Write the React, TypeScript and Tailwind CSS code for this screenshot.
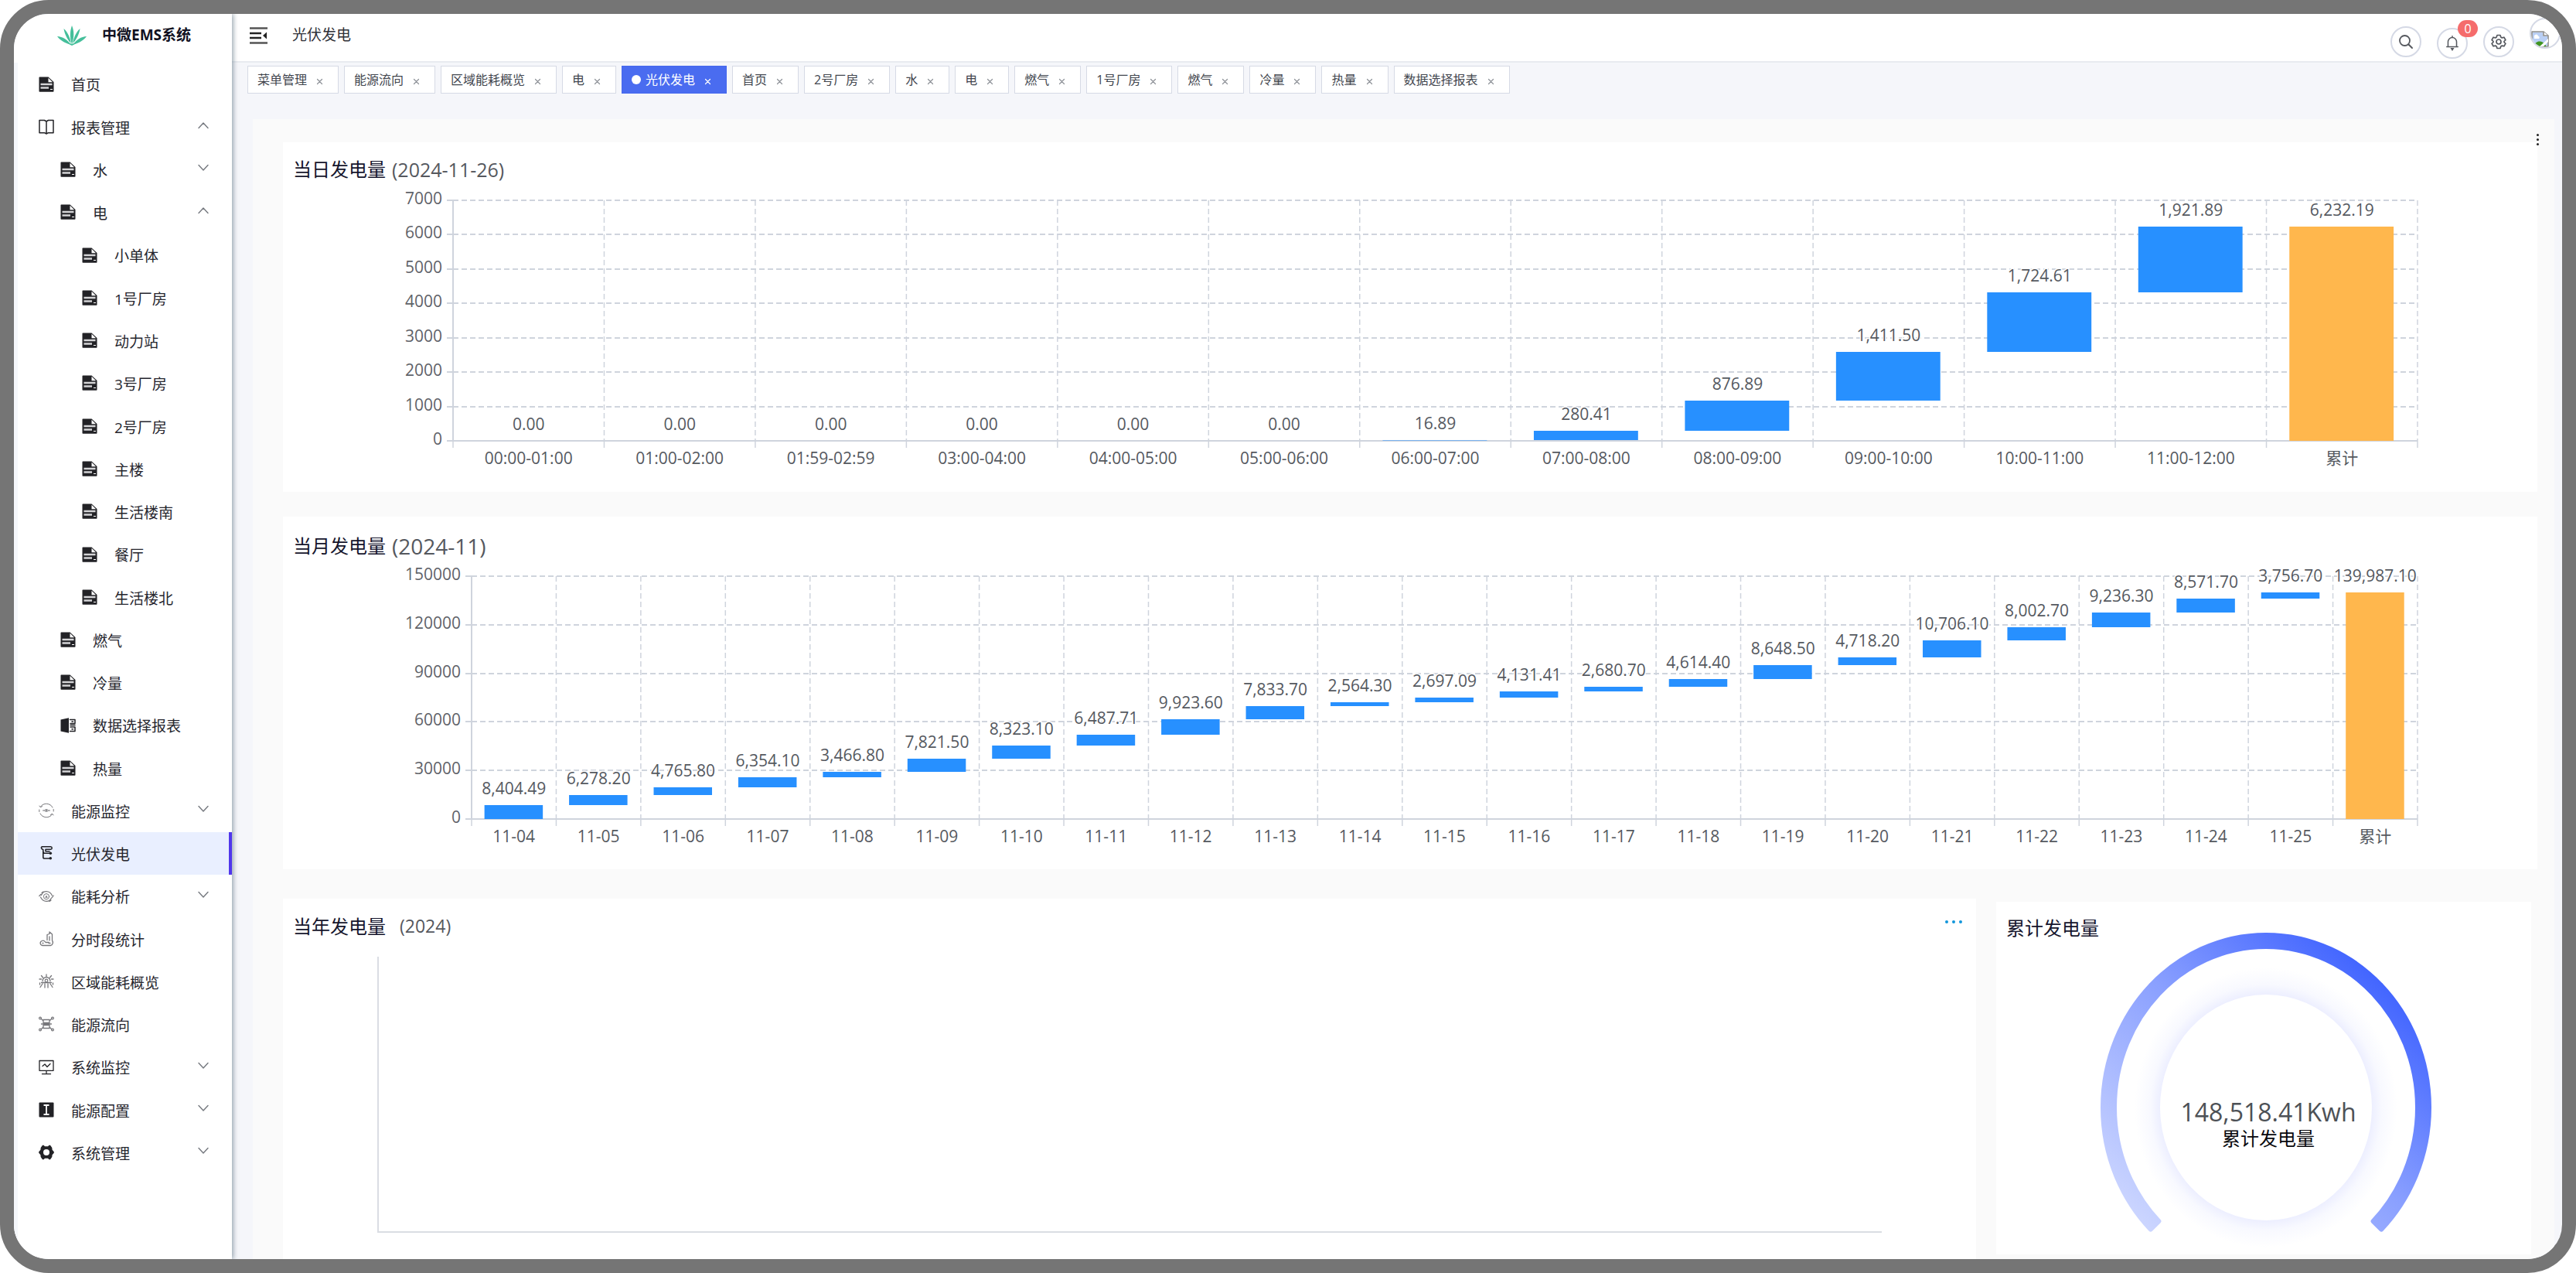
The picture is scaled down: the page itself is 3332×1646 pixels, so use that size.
import React from "react";

type IconName =
  | "doc" | "book" | "panel" | "cycle" | "tree" | "orbit"
  | "segment" | "region" | "flow" | "monitor" | "config" | "gear";

const stroke = { fill: "none", stroke: "currentColor", strokeLinecap: "round", strokeLinejoin: "round" } as const;

function Icon({ name }: { name: IconName }) {
  const dark = "size-5 shrink-0 text-[#222226]";
  const light = "size-5 shrink-0 text-[#77777b]";
  switch (name) {
    case "doc":
      return (
        <svg viewBox="0 0 20 20" className={dark} aria-hidden="true">
          <path d="M2 .5h10.5L19.500 7v12a.8.8 0 0 1-.8.8H1.300a.8.800 0 0 1-.8-.8V1.300A.8.800 0 0 1 1.300.5z" fill="currentColor" />
          <path d="M12.500 1.800V7.300h5.600z" fill="#fff" />
          <path d="M2.500 10h15M2.500 14.500h10.500" stroke="#d4d4d6" strokeWidth="2.400" />
          <path d="M15 16.500h3" stroke="#fff" strokeWidth="1" />
        </svg>
      );
    case "book":
      return (
        <svg viewBox="0 0 20 20" className={dark} aria-hidden="true">
          <path d="M1 1.500h6.500L10 3v16l-2.500-1.300H1zM19 1.500h-6.500L10 3v16l2.500-1.300H19z" {...stroke} strokeWidth="1.500" />
        </svg>
      );
    case "panel":
      return (
        <svg viewBox="0 0 20 20" className={dark} aria-hidden="true">
          <path d="M.5 2.500 11 .3v19.400L.5 17.500z" fill="currentColor" />
          <path d="M12.500 2.500H19v5h-6M13 9.500h6M13 12h6v5.500h-6.500M15 5h1.500M15 14.800h1.500" {...stroke} strokeWidth="1.500" />
        </svg>
      );
    case "cycle":
      return (
        <svg viewBox="0 0 20 20" className={light} aria-hidden="true">
          <path d="M2.500 5A9 9 0 0 1 18 6M17.500 15A9 9 0 0 1 2 14M.8 4l1.700 1.800 2-1.200M19.200 16l-1.700-1.800-2 1.200M.800 9v2.500M19.200 8.500V11" {...stroke} strokeWidth="1" />
          <path d="M5.500 10h1.800c1.400-1.800 4-1.800 5.400 0h1.800M7.300 10c1.400 1.800 4 1.800 5.400 0" {...stroke} strokeWidth="1" />
          <circle cx="10" cy="10" r="1" fill="currentColor" />
        </svg>
      );
    case "tree":
      return (
        <svg viewBox="0 0 20 20" className={dark} aria-hidden="true">
          <path d="M4.500 1.800h11a1.600 1.600 0 0 1 0 3.400H9M4.500 1.800C2.500 2.500 3.500 5 5.800 5.500v9.700a1.800 1.800 0 0 0 1.800 1.800H14M6 8.200a2 2 0 0 0 2 2h6M9 5.200v2.500h5" {...stroke} strokeWidth="1.600" />
          <circle cx="15.300" cy="10.200" r="1.800" fill="currentColor" />
          <circle cx="15.300" cy="16.800" r="1.800" fill="currentColor" />
        </svg>
      );
    case "orbit":
      return (
        <svg viewBox="0 0 20 20" className={light} aria-hidden="true">
          <path d="M3.500 8.500C6 2 14 2 17.500 9M16.500 12c-2.500 6-10.500 6-14-1M.8 9.500l2-2M19.200 9l-1.800 2.500M6 4 4 5.500M14 16.500l2-1.500" {...stroke} strokeWidth="1.200" />
          <circle cx="10" cy="10.200" r="3.600" {...stroke} strokeWidth="1" />
          <path d="m10 8.500 1.800 3.200H8.200z" fill="currentColor" />
        </svg>
      );
    case "segment":
      return (
        <svg viewBox="0 0 20 20" className={light} aria-hidden="true">
          <path d="M11 11.500V4.500l3-1V1l3.500 3v8c1.500 2 1 6-2 6.500H5c-3.500-.5-4-5-.5-6 2-1 3.500.5 4.500 2h4M5 15.500h1M14 7v5M13 15.500h2" {...stroke} strokeWidth="1.300" />
        </svg>
      );
    case "region":
      return (
        <svg viewBox="0 0 20 20" className={light} aria-hidden="true">
          <path d="M5 9.500a5 5 0 0 1 10 0M3.500 11.500h13M10 1v3M3.500 2.500l2 2.500M16.500 2.500l-2 2.500M1 7h2.500M16.500 7H19M5 13l-3 4.500M15 13l3 4.500M8 13v5M12 13v5M1.500 12v2M18.500 12v2" {...stroke} strokeWidth="1.300" />
          <circle cx="10" cy="9" r="1.800" {...stroke} strokeWidth="1.200" />
        </svg>
      );
    case "flow":
      return (
        <svg viewBox="0 0 20 20" className={light} aria-hidden="true">
          <path d="M6 4.500h8v4H6zM6 11.500h8v4H6zM3 3l3 3M17 3l-3 3M3 17l3-3M17 17l-3-3M3.500 10h13" {...stroke} strokeWidth="1.300" />
          <g {...stroke} strokeWidth="1.200">
            <circle cx="2" cy="2.500" r="1.400" /><circle cx="18" cy="2.500" r="1.400" />
            <circle cx="2" cy="17.500" r="1.400" /><circle cx="18" cy="17.500" r="1.400" />
          </g>
        </svg>
      );
    case "monitor":
      return (
        <svg viewBox="0 0 20 20" className={dark} aria-hidden="true">
          <path d="M1 1.500h18v12.800H1zM10 14.500v4M4.500 18.700h11M5 8.500l3-2.500 3 3.500 4-4" {...stroke} strokeWidth="1.300" />
        </svg>
      );
    case "config":
      return (
        <svg viewBox="0 0 20 20" className={dark} aria-hidden="true">
          <rect x=".5" y=".5" width="19" height="19" rx="1" fill="currentColor" />
          <path d="M6.500 4h7M6.500 16h7M10 4v12" stroke="#fff" strokeWidth="1.800" fill="none" />
        </svg>
      );
    case "gear":
      return (
        <svg viewBox="0 0 20 20" className={dark} aria-hidden="true">
          <path d="M5 .8h1.500L8 2.200h4L13.500.8H15l2.300 3.200.3 2.800 2.200 2.400v1.600l-2.200 2.400-.3 2.800-2.300 3.200h-1.500L12 17.800H8l-1.500 1.400H5L2.700 16l-.3-2.800L.2 10.800V9.200l2.200-2.400L2.700 4zM10 6a4 4 0 1 0 0 8 4 4 0 0 0 0-8z" fill="currentColor" fillRule="evenodd" />
        </svg>
      );
  }
}

function Chevron({ up }: { up?: boolean }) {
  return (
    <svg viewBox="0 0 14 10" className="mb-1 h-2.5 w-3.5 shrink-0 text-[#75797f]" aria-hidden="true">
      <path d={up ? "M1 8.500 7 2l6 6.500" : "M1 1.500 7 8l6-6.500"} {...stroke} strokeWidth="1.400" />
    </svg>
  );
}

interface MenuEntry {
  label: string;
  icon: IconName;
  level: 0 | 1 | 2;
  toggle?: "open" | "closed";
  active?: boolean;
}

const menu: MenuEntry[] = [
  { label: "首页", icon: "doc", level: 0 },
  { label: "报表管理", icon: "book", level: 0, toggle: "open" },
  { label: "水", icon: "doc", level: 1, toggle: "closed" },
  { label: "电", icon: "doc", level: 1, toggle: "open" },
  { label: "小单体", icon: "doc", level: 2 },
  { label: "1号厂房", icon: "doc", level: 2 },
  { label: "动力站", icon: "doc", level: 2 },
  { label: "3号厂房", icon: "doc", level: 2 },
  { label: "2号厂房", icon: "doc", level: 2 },
  { label: "主楼", icon: "doc", level: 2 },
  { label: "生活楼南", icon: "doc", level: 2 },
  { label: "餐厅", icon: "doc", level: 2 },
  { label: "生活楼北", icon: "doc", level: 2 },
  { label: "燃气", icon: "doc", level: 1 },
  { label: "冷量", icon: "doc", level: 1 },
  { label: "数据选择报表", icon: "panel", level: 1 },
  { label: "热量", icon: "doc", level: 1 },
  { label: "能源监控", icon: "cycle", level: 0, toggle: "closed" },
  { label: "光伏发电", icon: "tree", level: 0, active: true },
  { label: "能耗分析", icon: "orbit", level: 0, toggle: "closed" },
  { label: "分时段统计", icon: "segment", level: 0 },
  { label: "区域能耗概览", icon: "region", level: 0 },
  { label: "能源流向", icon: "flow", level: 0 },
  { label: "系统监控", icon: "monitor", level: 0, toggle: "closed" },
  { label: "能源配置", icon: "config", level: 0, toggle: "closed" },
  { label: "系统管理", icon: "gear", level: 0, toggle: "closed" },
];

const indent = ["pl-[27px]", "pl-[55px]", "pl-[83px]"];

function MenuRow({ item }: { item: MenuEntry }) {
  const cls = `flex flex-1 items-center gap-[22px] text-left ${indent[item.level]} ${
    item.active ? "border-r-4 border-[#5036ec] bg-[#e9efff]" : "pr-[30px]"
  }`;
  const body = (
    <>
      <Icon name={item.icon} />
      <span className="flex-1 pt-1">{item.label}</span>
      {item.toggle && <Chevron up={item.toggle === "open"} />}
    </>
  );
  return item.toggle ? (
    <button type="button" aria-expanded={item.toggle === "open"} className={cls}>{body}</button>
  ) : (
    <a href="#" className={cls}>{body}</a>
  );
}

function Sidebar() {
  return (
    <aside className="z-10 flex w-[282px] shrink-0 flex-col bg-white shadow-[2px_0_6px_0px_rgba(90,110,125,0.6)]">
      <div className="flex h-[63px] shrink-0 items-center gap-5 pb-2 pl-14">
        <svg viewBox="0 0 38 26" className="h-[26px] w-[38px]" aria-hidden="true">
          <g fill="#45bf9b">
            <path d="M19 0c3 7 3 15 .3 23h-.6C16 15 16.500 7 19 0z" />
            <path d="M8.500 4c5 4.500 8 11 9.300 19-4.500-4.500-8-11-9.300-19z" />
            <path d="M29.500 4c-5 4.500-8 11-9.300 19 4.500-4.500 8-11 9.300-19z" />
            <path d="M0 14c7 .5 13 4 17.500 10.500C10.500 23 4 19.500 0 14z" />
            <path d="M38 14c-7 .5-13 4-17.500 10.500 7-1.500 13.500-5 17.500-10.500z" />
            <path d="m13 23 6 3 6-3-6 .5z" />
          </g>
        </svg>
        <span className="text-[19px] font-bold text-[#111122]">中微EMS系统</span>
      </div>
      <nav className="flex flex-1 flex-col border-l-[5px] border-[#f5f7fb] pb-[110px] text-[19px] text-[#26262e]">
        {menu.map((m, i) => <MenuRow key={i} item={m} />)}
      </nav>
    </aside>
  );
}

const round = "flex size-10 items-center justify-center rounded-full border-2 border-[#d5d9e5] bg-white text-[#55585e]";

function Header() {
  return (
    <header className="flex h-[63px] shrink-0 border-b-2 border-[#e8ebf0] bg-white pr-0.5 pl-[23px]">
      <div className="flex flex-1 items-center gap-8 pb-1.5">
        <button type="button" aria-label="折叠菜单">
          <svg viewBox="0 0 23 22" className="h-[22px] w-[23px]" aria-hidden="true">
            <path d="M0 1.500h23M0 20.500h23" stroke="#555" strokeWidth="2.500" />
            <path d="M0 8h15M0 14h15" stroke="#222" strokeWidth="2.500" />
            <path d="M22 6.500v9L17 11z" fill="#222" />
          </svg>
        </button>
        <span className="text-[19px] text-[#303138]">光伏发电</span>
      </div>
      <div className="flex items-start gap-5">
        <button type="button" aria-label="搜索" className={`mt-4 ${round}`}>
          <svg viewBox="0 0 20 20" className="size-5" aria-hidden="true">
            <circle cx="8.500" cy="8.500" r="6.500" {...stroke} strokeWidth="1.800" />
            <path d="m13.500 13.500 4.500 4.500" {...stroke} strokeWidth="2" />
          </svg>
        </button>
        <button type="button" aria-label="通知" className={`relative mt-[18px] ${round}`}>
          <svg viewBox="0 0 20 22" className="h-[22px] w-5" aria-hidden="true">
            <path d="M3.500 17V9.500a6.500 6.500 0 0 1 13 0V17M1.500 17h17M10 3V1" {...stroke} strokeWidth="1.800" transform="translate(1.500 1) scale(.85)" />
            <path d="M7.500 17h5L10 21z" fill="currentColor" />
          </svg>
          <span className="absolute -top-3 -right-[15px] flex h-[22px] w-[26px] items-center justify-center rounded-full bg-[#f56c6c] text-base text-white">0</span>
        </button>
        <button type="button" aria-label="设置" className={`mt-4 ${round}`}>
          <svg viewBox="0 0 20 20" className="size-5" aria-hidden="true">
            <path d="M8 1.500h4l.8 2.500 1.500.9 2.600-.7 2 3.400L17 9.500v1l1.900 1.900-2 3.400-2.600-.7-1.500.9-.8 2.500H8L7.200 16l-1.500-.9-2.600.7-2-3.400L3 10.500v-1L1.100 7.600l2-3.400 2.600.7L7.200 4z" {...stroke} strokeWidth="1.700" />
            <circle cx="10" cy="10" r="3" {...stroke} strokeWidth="1.700" />
          </svg>
        </button>
        <button type="button" aria-label="用户" className="mt-[5px] flex size-10 items-end overflow-hidden rounded-full border-2 border-[#d5d9e5] bg-white">
          <svg viewBox="0 0 23 21" className="h-[21px] w-[23px]" aria-hidden="true">
            <path d="M1 1h15l6 5v14H1z" fill="#fff" stroke="#8a8a8a" strokeWidth="1.600" />
            <path d="M2 2h13v5h6v12H2z" fill="#b9cff5" />
            <path d="M4 8a2.500 2.500 0 0 1 5-1.500A2 2 0 0 1 10 10H4z" fill="#fff" />
            <path d="M3 20c3-8 11-9 16-1v1z" fill="#3f9421" />
            <path d="M11 20 22 10v4l-6 6z" fill="#fff" />
            <path d="M16 1v5h6" fill="#fff" stroke="#8a8a8a" strokeWidth="1.600" />
          </svg>
        </button>
      </div>
    </header>
  );
}

const tabs = ["菜单管理", "能源流向", "区域能耗概览", "电", "光伏发电", "首页", "2号厂房", "水", "电", "燃气", "1号厂房", "燃气", "冷量", "热量", "数据选择报表"];

function Tabs() {
  return (
    <div className="mt-1 flex shrink-0 gap-[7px] pl-5">
      {tabs.map((t, i) => {
        const on = i === 4;
        return (
          <div key={i} className={`flex h-9 items-center border pr-[19px] pl-3 text-base ${on ? "border-[#4668ee] bg-[#4a6cf0] text-white" : "border-[#d6dae5] bg-white text-[#42464e]"}`}>
            {on && <span className="mr-1.5 size-3 rounded-full bg-white" />}
            <a href="#" className="whitespace-nowrap">{t}</a>
            <button type="button" aria-label={`关闭${t}`} className={`ml-3 pt-1 ${on ? "text-white" : "text-[#8d9197]"}`}>
              <svg viewBox="0 0 9 9" className="size-[9px]" aria-hidden="true">
                <path d="m1.500 1.500 6 6M7.500 1.500l-6 6" {...stroke} strokeWidth="1.200" />
              </svg>
            </button>
          </div>
        );
      })}
    </div>
  );
}

interface Bar { label: string; value: number }

const daily: Bar[] = [
  ["00:00-01:00", 0], ["01:00-02:00", 0], ["01:59-02:59", 0], ["03:00-04:00", 0], ["04:00-05:00", 0], ["05:00-06:00", 0],
  ["06:00-07:00", 16.89], ["07:00-08:00", 280.41], ["08:00-09:00", 876.89], ["09:00-10:00", 1411.5], ["10:00-11:00", 1724.61], ["11:00-12:00", 1921.89],
].map(([label, value]) => ({ label: label as string, value: value as number }));

const monthly: Bar[] = [
  8404.49, 6278.2, 4765.8, 6354.1, 3466.8, 7821.5, 8323.1, 6487.71, 9923.6, 7833.7, 2564.3,
  2697.09, 4131.41, 2680.7, 4614.4, 8648.5, 4718.2, 10706.1, 8002.7, 9236.3, 8571.7, 3756.7,
].map((value, i) => ({ label: `11-${String(i + 4).padStart(2, "0")}`, value }));

const fmt = (n: number) => n.toLocaleString("en-US", { minimumFractionDigits: 2, maximumFractionDigits: 2 });

function Waterfall({ data, total, max, step, height }: { data: Bar[]; total: number; max: number; step: number; height: number }) {
  const count = data.length + 1;
  const slot = 100 / count;
  const y = (v: number) => Math.round(height - (v / max) * height);
  const pct = (n: number) => `${n}%`;
  const ticks = Array.from({ length: max / step + 1 }, (_, i) => i * step);
  let sum = 0;
  const bars = data.map((d) => {
    const from = sum;
    sum += d.value;
    return { ...d, from, to: sum, color: "#2790ff" };
  });
  bars.push({ label: "累计", value: total, from: 0, to: total, color: "#ffb74d" });
  return (
    <svg width="100%" height={height} className="block overflow-visible text-[21px]" role="img">
      {ticks.map((t) => (
        <g key={t}>
          <line x1="-8" x2="0" y1={y(t)} y2={y(t)} stroke="#cfd4dd" strokeWidth="2" />
          <line x1="0" x2="100%" y1={y(t)} y2={y(t)} stroke="#cfd4dd" strokeWidth="2" strokeDasharray={t === 0 ? undefined : "7 4"} />
          <text x="-14" y={y(t) + 5} textAnchor="end" fill="#5f6369">{t}</text>
        </g>
      ))}
      {Array.from({ length: count + 1 }, (_, i) => (
        <g key={i}>
          <line x1={pct(i * slot)} x2={pct(i * slot)} y1="0" y2={height} stroke="#cfd4dd" strokeWidth={i === 0 ? 2 : 1.5} strokeDasharray={i === 0 ? undefined : "7 4"} />
          <line x1={pct(i * slot)} x2={pct(i * slot)} y1={height} y2={height + 9} stroke="#cfd4dd" strokeWidth="1.500" />
        </g>
      ))}
      {bars.map((b, i) => (
        <g key={i}>
          {b.value > 0 && (
            <rect x={pct((i + 0.152) * slot)} width={pct(0.69 * slot)} y={y(b.to)} height={Math.max(1, y(b.from) - y(b.to))} fill={b.color} opacity={b.value < 50 ? 0.5 : 1} />
          )}
          <text x={pct((i + 0.5) * slot)} y={y(b.to) - 14} textAnchor="middle" fill="#55595f" stroke="#fff" strokeWidth="3" paintOrder="stroke">{fmt(b.value)}</text>
          <text x={pct((i + 0.5) * slot)} y={height + 30} textAnchor="middle" fill="#55595f">{b.label}</text>
        </g>
      ))}
    </svg>
  );
}

function Gauge() {
  const cx = 217, cy = 230, k = Math.SQRT1_2;
  const ro = [211, 223], ri = [196, 208];
  const p = (r: number[], s: number) => `${cx + s * r[0] * k} ${cy + r[1] * k}`;
  const arc = `M${p(ro, -1)}A${ro[0]} ${ro[1]} 0 1 1 ${p(ro, 1)}L${p(ri, 1)}A${ri[0]} ${ri[1]} 0 1 0 ${p(ri, -1)}Z`;
  return (
    <svg viewBox="0 0 434 420" className="h-[420px] w-[434px]" role="img" aria-label="累计发电量 148,518.41Kwh">
      <defs>
        <linearGradient id="ring" x1="0" y1="1" x2="1" y2="0">
          <stop offset="0" stopColor="#d6deff" />
          <stop offset="0.500" stopColor="#8aa0ff" />
          <stop offset="0.880" stopColor="#3c60ff" />
          <stop offset="1" stopColor="#3c60ff" />
        </linearGradient>
        <radialGradient id="halo">
          <stop offset="0.800" stopColor="#eceeff" />
          <stop offset="0.880" stopColor="#f8f9ff" />
          <stop offset="1" stopColor="#ffffff" />
        </radialGradient>
      </defs>
      <path d={arc} fill="url(#ring)" stroke="url(#ring)" strokeWidth="6" strokeLinejoin="round" />
      <ellipse cx={cx} cy={cy} rx="170" ry="181" fill="url(#halo)" />
      <ellipse cx={cx} cy={cy} rx="137" ry="146" fill="#fff" />
      <text x={cx + 3} y="248" textAnchor="middle" fill="#4d5156" className="text-[32px]">148,518.41Kwh</text>
      <text x={cx + 3} y="279" textAnchor="middle" fill="#08080c" className="text-2xl">累计发电量</text>
    </svg>
  );
}

function Title({ children, date }: { children: React.ReactNode; date?: React.ReactNode }) {
  return (
    <h2 className="flex items-center gap-2 pl-[13px] text-2xl text-[#15152c]">
      {children}
      {date}
    </h2>
  );
}

export default function App() {
  return (
    <div className="flex h-screen overflow-hidden rounded-[63px] border-[18px] border-[#757575] bg-[#f5f6fa] font-['Open_Sans','Noto_Sans_CJK_SC',sans-serif]">
      <Sidebar />
      <div className="flex min-w-0 flex-1 flex-col">
        <Header />
        <Tabs />
        <main className="relative mt-[33px] mr-2.5 ml-[27px] flex flex-1 flex-col bg-[#fafafa] pt-[30px] pr-[22px] pb-1 pl-[39px]">
          <button type="button" aria-label="更多" className="absolute top-4 right-4 flex h-5 w-3 flex-col items-center justify-center gap-[3px]">
            <span className="size-[3px] rounded-full bg-[#222]" />
            <span className="size-[3px] rounded-full bg-[#222]" />
            <span className="size-[3px] rounded-full bg-[#222]" />
          </button>

          <section className="h-[452px] shrink-0 bg-white">
            <div className="flex h-[75px] items-center pb-1">
              <Title date={<span className="text-[25px] text-[#55585e]">(2024-11-26)</span>}>当日发电量</Title>
            </div>
            <div className="pr-[155px] pl-[220px]">
              <Waterfall data={daily} total={6232.19} max={7000} step={1000} height={311} />
            </div>
          </section>

          <section className="mt-8 h-[456px] shrink-0 bg-white">
            <div className="flex h-[77px] items-center">
              <Title date={<span className="text-[28px] text-[#55585e]">(2024-11)</span>}>当月发电量</Title>
            </div>
            <div className="pr-[155px] pl-[244px]">
              <Waterfall data={monthly} total={139987.1} max={150000} step={30000} height={314} />
            </div>
          </section>

          <div className="mt-[38px] grid flex-1 grid-cols-[219fr_70fr] gap-[26px]">
            <section className="flex flex-col bg-white">
              <div className="flex h-[75px] items-center justify-between pr-[18px] pb-1">
                <Title date={<span className="ml-2.5 text-[23px] text-[#55585e]">(2024)</span>}>当年发电量</Title>
                <button type="button" aria-label="更多操作" className="mb-3 flex gap-[5px]">
                  <span className="size-1 rounded-full bg-[#1296db]" />
                  <span className="size-1 rounded-full bg-[#1296db]" />
                  <span className="size-1 rounded-full bg-[#1296db]" />
                </button>
              </div>
              <div className="mx-[122px] mb-9 flex-1 border-b-2 border-l-2 border-[#dadde3]" />
            </section>
            <section className="mt-1 mr-2 mb-2 grid bg-white">
              <div className="col-start-1 row-start-1 pt-[18px]">
                <Title>累计发电量</Title>
              </div>
              <div className="col-start-1 row-start-1 flex justify-center pt-9 pl-1.5">
                <Gauge />
              </div>
            </section>
          </div>
        </main>
      </div>
    </div>
  );
}
